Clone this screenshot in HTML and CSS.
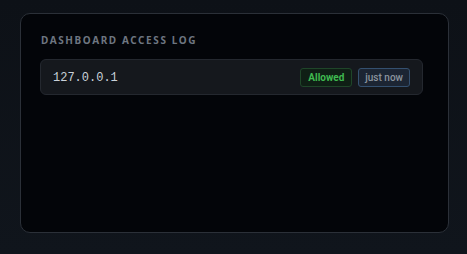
FILE: index.html
```html
<!DOCTYPE html>
<html>
<head>
<meta charset="utf-8">
<link rel="stylesheet" href="styles.css">
</head>
<body>
<div class="card">
  <div class="title">Dashboard Access Log</div>
  <div class="row">
    <span class="ip">127.0.0.1</span>
    <div class="badges">
      <span class="badge allowed">Allowed</span>
      <span class="badge time">just now</span>
    </div>
  </div>
</div>
</body>
</html>
```
FILE: styles.css
```css
html, body {
  margin: 0;
  padding: 0;
}
body {
  width: 467px;
  height: 254px;
  background: linear-gradient(180deg, #0d1117 0%, #10151c 100%);
  padding: 13px 18px 22px 20px;
  box-sizing: border-box;
  font-family: "Noto Sans", "DejaVu Sans", sans-serif;
}
.card {
  height: 220px;
  box-sizing: border-box;
  background: #030509;
  border: 1px solid #2b3038;
  border-radius: 10px;
  padding: 20px 25px 20px 19px;
}
.title {
  font-size: 10px;
  font-weight: 700;
  letter-spacing: 1.6px;
  text-transform: uppercase;
  color: #6e7681;
  line-height: 12px;
  padding-left: 1px;
}
.row {
  margin-top: 13px;
  height: 36px;
  box-sizing: border-box;
  background: #15181d;
  border: 1px solid #24282f;
  border-radius: 6px;
  display: flex;
  align-items: center;
  justify-content: space-between;
  padding: 0 12px;
}
.ip {
  font-family: "Liberation Mono", monospace;
  font-size: 12px;
  line-height: 14px;
  padding-top: 2px;
  color: #c9d1d9;
}
.badges {
  display: flex;
  gap: 6px;
  padding-top: 1px;
}
.badge {
  height: 19px;
  box-sizing: border-box;
  display: flex;
  align-items: center;
  padding: 0 7px;
  border-radius: 3px;
  font-family: Roboto, "Noto Sans", sans-serif;
  font-size: 10px;
  font-weight: 700;
  border: 1px solid;
}
.allowed {
  color: #3fb950;
  background: #0f1f15;
  border-color: #1f4529;
}
.time {
  color: #8b949e;
  background: #1c2533;
  border-color: #34506f;
  font-weight: 500;
  padding: 0 6px;
}
```
